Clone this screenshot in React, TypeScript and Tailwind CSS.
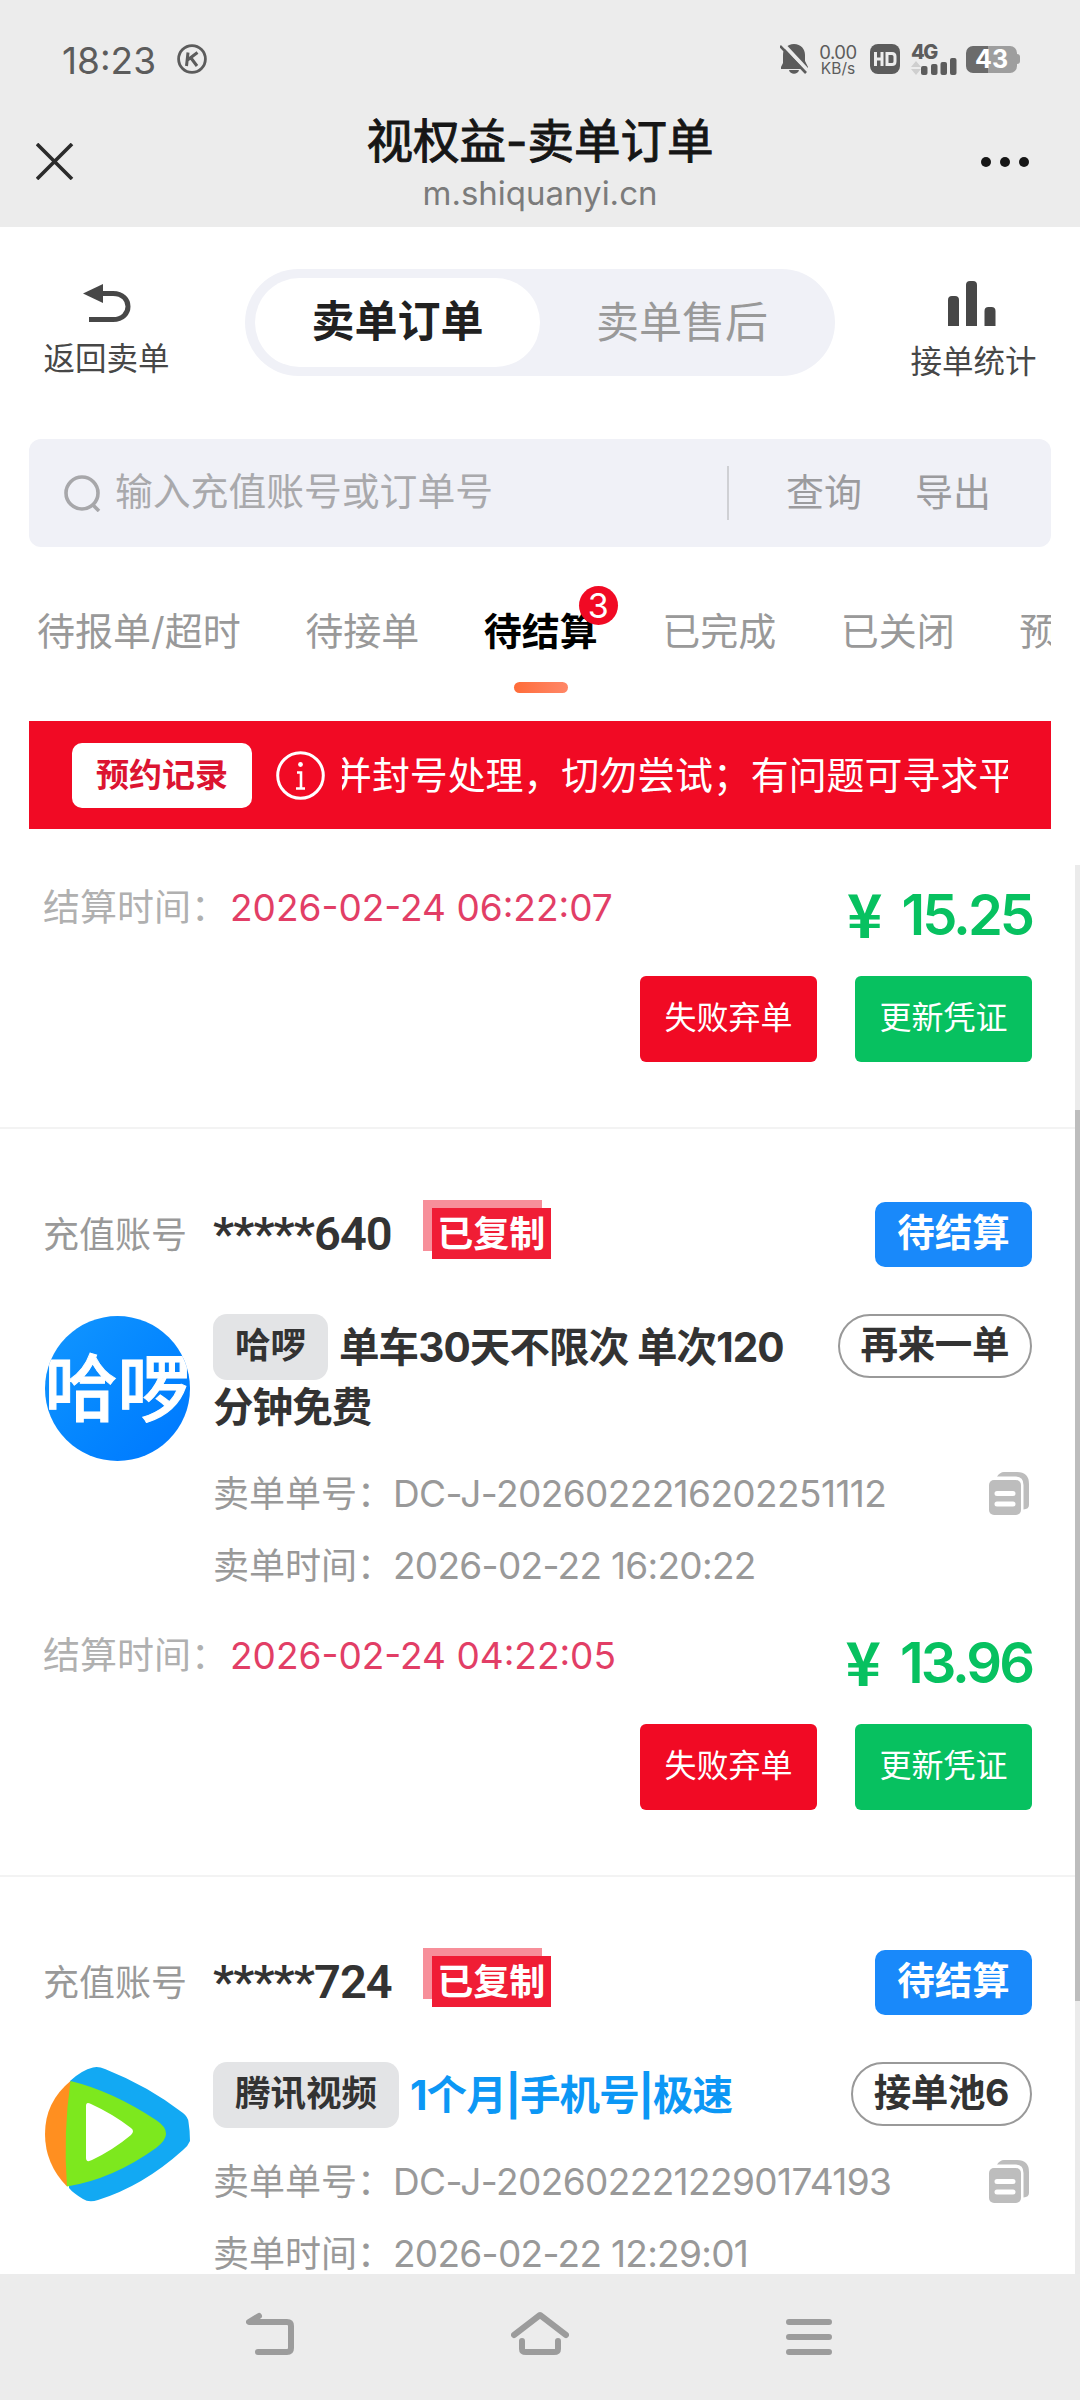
import type { ReactNode } from "react";

type Order = {
  account: string;
  brand: string;
  logo: ReactNode;
  title: string;
  titleClass: string;
  action: string;
  orderNo: string;
  orderTime: string;
  settleTime?: string;
  price?: string;
};

const tabs = ["待报单/超时", "待接单", "待结算", "已完成", "已关闭", "预约"];

function HelloLogo() {
  return (
    <div className="mt-[2px] flex h-[145px] w-[145px] shrink-0 items-center justify-center overflow-hidden rounded-full bg-linear-to-br from-[#1296ff] to-[#0077ff]">
      <span className="text-[73px] leading-none font-medium whitespace-nowrap text-white [-webkit-text-stroke:1px_white]">
        哈啰
      </span>
    </div>
  );
}

function TencentVideoLogo() {
  return (
    <svg className="mt-[5px] h-[135px] w-[145px] shrink-0" viewBox="0 0 145 135">
      <path
        d="M25 14 Q37 3 48 .5 Q53 -1 60 2 Q103 19 138 46 Q143 50 143.5 55 Q145 64 145 74 Q143 79 138 83 Q98 119 53 133 Q44 136 38 132 Q28 126 24 121 L24 110 Z"
        fill="#12a9f3"
      />
      <path d="M25.5 14 Q0 35 0 67 Q0 97 22 119.5 L32 66 Z" fill="#ff8f20" />
      <path
        d="M25.5 14 Q67 24 111 53 Q131 66 111 81 Q68 112 22 119.5 Q18 66 25.5 14 Z"
        fill="#7de81e"
      />
      <path
        d="M41 39 Q41 34 46 37 Q68 47 86 61 Q90 64 86 68 Q68 83 47 93 Q41 96 41 91 Z"
        fill="#fff"
      />
    </svg>
  );
}

const orders: Order[] = [
  {
    account: "*****640",
    brand: "哈啰",
    logo: <HelloLogo />,
    title: "单车30天不限次 单次120分钟免费",
    titleClass: "text-[#333]",
    action: "再来一单",
    orderNo: "DC-J-2026022216202251112",
    orderTime: "2026-02-22 16:20:22",
    settleTime: "2026-02-24 04:22:05",
    price: "13.96",
  },
  {
    account: "*****724",
    brand: "腾讯视频",
    logo: <TencentVideoLogo />,
    title: "1个月|手机号|极速",
    titleClass: "text-[#0c97f5]",
    action: "接单池6",
    orderNo: "DC-J-2026022212290174193",
    orderTime: "2026-02-22 12:29:01",
  },
];

function StatusBar() {
  return (
    <div className="flex h-[118px] items-center pr-[60px] pl-[62px] text-[#5c5c5c]">
      <span className="pt-[2px] text-[37px] leading-none">18:23</span>
      <svg className="ml-[21px] h-[30px] w-[30px]" viewBox="0 0 30 30" fill="none" stroke="currentColor">
        <circle cx="15" cy="15" r="13.4" strokeWidth="2.8" />
        <path d="M11 8.5 9.5 22M20.5 8.5 10.5 16M14 14l6 8" strokeWidth="3" />
      </svg>

      <div className="ml-auto flex items-center">
        <svg className="h-[32px] w-[28px]" viewBox="0 0 28 32">
          <path
            d="M14 1c7 0 11 5 11 11v6l3 6v2H1v-2l2-4v-8C3 6 7 1 14 1ZM9 27h10c-1 5-9 5-10 0Z"
            fill="currentColor"
          />
          <path d="M2 0 29 29" stroke="#ececec" strokeWidth="4" />
          <path d="M0 3 26 30" stroke="currentColor" strokeWidth="2.6" />
        </svg>
        <div className="ml-[11px] w-[38px] text-center">
          <div className="text-[18.5px] leading-[18px] tracking-tight">0.00</div>
          <div className="text-[15.5px] leading-[15px]">KB/s</div>
        </div>
        <svg className="ml-[13px] h-[30px] w-[30px]" viewBox="0 0 30 30">
          <rect width="30" height="30" rx="8" fill="currentColor" />
          <path
            d="M5.5 8v14M12 8v14M5.5 15H12M17 9.5h5q3 0 3 3v5q0 3-3 3h-5Z"
            fill="none"
            stroke="#ececec"
            strokeWidth="3"
          />
        </svg>
        <div className="ml-[11px] h-[31px] w-[46px]">
          <div className="text-[20px] leading-[16px] font-extrabold tracking-[-1.5px]">4G</div>
          <svg className="h-[15px] w-[46px]" viewBox="0 0 46 15" overflow="visible">
            <path d="M0 7 5 1l5 6ZM0 9h10l-5 6Z" fill="#cfcfcf" />
            <rect x="10" y="6" width="6.500" height="9" rx="2" fill="currentColor" />
            <rect x="20" y="4" width="6.500" height="11" rx="2" fill="currentColor" />
            <rect x="29.500" y="2" width="6.500" height="13" rx="2" fill="currentColor" />
            <rect x="39" y="-2" width="6.500" height="17" rx="2" fill="currentColor" />
          </svg>
        </div>
        <div className="ml-[9px] flex items-center">
          <div className="flex h-[27px] w-[51px] items-center justify-center rounded-[7px] bg-linear-to-r from-[#6b6b6b] from-43% to-[#9e9e9e] to-43% text-[25px] leading-none font-bold text-white">
            43
          </div>
          <div className="h-[10px] w-[3px] rounded-r-sm bg-[#9e9e9e]" />
        </div>
      </div>
    </div>
  );
}

function TitleBar() {
  return (
    <div className="flex h-[109px] items-start justify-between pr-[51px] pl-[36px]">
      <svg className="mt-[25px] h-[37px] w-[63px]" viewBox="0 0 63 37">
        <path d="M1 1 36 36M36 1 1 36" stroke="#2b2b2b" strokeWidth="3.6" />
      </svg>
      <div className="flex flex-col items-center">
        <div className="text-[46.5px] leading-[46px] text-[#161616] [-webkit-text-stroke:1px_#161616]">
          视权益-卖单订单
        </div>
        <div className="mt-[9px] text-[33px] leading-[40px] text-[#7b7b7b]">m.shiquanyi.cn</div>
      </div>
      <div className="mt-[39px] flex gap-[9px]">
        <i className="h-[10px] w-[10px] rounded-full bg-[#161616]" />
        <i className="h-[10px] w-[10px] rounded-full bg-[#161616]" />
        <i className="h-[10px] w-[10px] rounded-full bg-[#161616]" />
      </div>
    </div>
  );
}

function Toolbar() {
  return (
    <div className="flex h-[149px] items-start justify-between pt-[42px] pr-[43px] pl-[43px] text-[#474747]">
      <div className="flex w-[127px] flex-col items-center">
        <svg className="mt-[15px] h-[38px] w-[48px]" viewBox="0 0 48 38">
          <path d="M0 9.500 20 0v19Z" fill="currentColor" />
          <path d="M18 9.500h12c20 0 20 26 0 26H6" fill="none" stroke="currentColor" strokeWidth="5" />
        </svg>
        <span className="mt-[21px] text-[31.5px] leading-[32px] whitespace-nowrap">返回卖单</span>
      </div>

      <div className="flex h-[107px] w-[590px] items-center rounded-full bg-[#f0f1f7] pl-[10px] text-[43px] leading-none">
        <div className="flex h-[89px] w-[285px] items-center justify-center rounded-full bg-white pb-[2px] font-bold text-[#212121]">
          卖单订单
        </div>
        <div className="flex-1 pl-[56px] text-[#999]">卖单售后</div>
      </div>

      <div className="flex w-[127px] flex-col items-center">
        <svg className="mt-[12px] mr-[3px] h-[45px] w-[48px]" viewBox="0 0 48 45" fill="currentColor">
          <path d="M0 45V19q0-4 4-4h3q4 0 4 4v26ZM18 45V4q0-4 4-4h3q4 0 4 4v41ZM36.500 45V30q0-4 4-4h3q4 0 4 4v15Z" />
        </svg>
        <span className="mt-[20px] text-[31.5px] leading-[32px] whitespace-nowrap">接单统计</span>
      </div>
    </div>
  );
}

function SearchBar() {
  return (
    <div className="mx-[29px] mt-[63px] flex h-[108px] items-center rounded-xl bg-[#f0f1f7] pl-[35px] text-[38px] leading-none text-[#9b9b9e]">
      <svg className="h-[37px] w-[37px]" viewBox="0 0 37 37" fill="none" stroke="#a7a7aa" strokeWidth="3.6">
        <circle cx="18" cy="18" r="16" />
        <path d="m28 29 7 7" />
      </svg>
      <span className="ml-[14px] pb-[2px] text-[37.8px] text-[#a9a9ac]">输入充值账号或订单号</span>
      <i className="ml-auto h-[54px] w-[2px] bg-[#cfd0d4]" />
      <span className="ml-[57px] pb-[2px]">查询</span>
      <span className="mr-[60px] ml-[53px] pb-[2px]">导出</span>
    </div>
  );
}

function Tabs() {
  return (
    <div className="mx-[29px] flex h-[174px] items-start gap-[64.5px] overflow-hidden pt-[65px] pl-[8px] text-[38px] leading-[38px] whitespace-nowrap text-[#999]">
      {tabs.map((tab) =>
        tab === "待结算" ? (
          <div key={tab} className="relative flex flex-col items-center font-bold text-black">
            {tab}
            <i className="mt-[32px] h-[11px] w-[54px] rounded-full bg-linear-to-r from-[#ff6c38] to-[#ff8767]" />
            <b className="absolute -top-[26px] -right-[20px] flex h-[39px] w-[39px] items-center justify-center rounded-full bg-[#f10a24] text-[34px] font-normal text-white">
              3
            </b>
          </div>
        ) : (
          <div key={tab}>{tab}</div>
        ),
      )}
    </div>
  );
}

function Notice() {
  return (
    <div className="mx-[29px] flex h-[108px] items-center bg-[#f10a24] pr-[43px] pl-[43px]">
      <div className="flex h-[65px] w-[180px] shrink-0 items-center justify-center rounded-[10px] bg-white text-[33px] leading-none font-bold text-[#dc1431]">
        预约记录
      </div>
      <svg className="ml-[24px] h-[49px] w-[49px] shrink-0" viewBox="0 0 49 49" fill="none" stroke="#fff">
        <circle cx="24.500" cy="24.500" r="22.800" strokeWidth="3" />
        <path d="M21 21.500h4V37M20 37.500h9" strokeWidth="2.600" />
        <circle cx="24.500" cy="13.500" r="2.400" fill="#fff" stroke="none" />
      </svg>
      <div className="ml-[17px] flex-1 overflow-hidden text-[37.9px] leading-[50px] whitespace-nowrap text-white">
        <span className="-ml-[8px]">并封号处理，切勿尝试；有问题可寻求平台</span>
      </div>
    </div>
  );
}

function CopyIcon() {
  return (
    <svg className="h-[43px] w-[40px]" viewBox="0 0 40 43" fill="#bdbdbd">
      <path d="M8 4.500Q11 0 15 0h13q12 0 12 12v21q0 4-5.500 4.500V13q0-8.500-8-8.500Z" />
      <rect y="8" width="32" height="35" rx="5" />
      <path d="M8 21.500h16M8 32h16" stroke="#fff" strokeWidth="5" strokeLinecap="round" />
    </svg>
  );
}

function CopiedStamp() {
  return (
    <div className="relative mb-[10px] h-[59px] w-[128px]">
      <div className="h-[51px] w-[119px] bg-[#f78f9a]" />
      <div className="absolute right-0 bottom-0 flex h-[51px] w-[119px] items-center justify-center bg-[#f01d35] text-[36px] leading-none font-bold text-white">
        已复制
      </div>
    </div>
  );
}

function Settlement({ time, price }: { time: string; price: string }) {
  return (
    <div className="pr-[48px] pb-[65px] pl-[43px]">
      <div className="flex h-[104px] items-center justify-between">
        <div className="flex items-center text-[37px] leading-none text-[#b0b0b0]">
          <span className="w-[187px]">结算时间：</span>
          <span className="text-[#e23e66]">{time}</span>
        </div>
        <div className="mt-[16px] flex items-center text-[56px] leading-none font-semibold tracking-[-3px] text-[#07c160]">
          <span className="mr-[22px] pb-[6px] font-['Noto_Sans_CJK_SC'] text-[60px] font-bold">¥</span>
          {price}
        </div>
      </div>
      <div className="mt-[17px] flex justify-end gap-[38px] text-[32px] leading-none text-white">
        <button className="h-[86px] w-[177px] rounded-md bg-[#f10a24] pb-[2px]">失败弃单</button>
        <button className="h-[86px] w-[177px] rounded-md bg-[#07c160] pb-[2px]">更新凭证</button>
      </div>
    </div>
  );
}

function OrderCard({ order }: { order: Order }) {
  return (
    <div className="border-t-2 border-[#f3f3f3]">
      <div className="mt-[73px] flex h-[65px] items-center pr-[48px] pl-[43px]">
        <span className="w-[170px] text-[36px] leading-none text-[#999]">充值账号</span>
        <span className="mr-[31px] pb-[3px] font-[Roboto] text-[47px] leading-none font-semibold tracking-[-0.9px] text-[#333]">
          {order.account}
        </span>
        <CopiedStamp />
        <span className="ml-auto flex h-[65px] w-[157px] items-center justify-center rounded-[10px] bg-[#1989fa] pb-[4px] text-[37.5px] leading-none font-bold text-white">
          待结算
        </span>
      </div>

      <div className="mt-[47px] flex pr-[48px] pl-[45px]">
        {order.logo}
        <div className="ml-[23px] flex-1">
          <div className="flex items-start justify-between">
            <p
              className={`mt-[4px] w-[590px] text-[40.5px] leading-[60px] font-bold tracking-[-0.9px] ${order.titleClass}`}
            >
              <span className="-mt-[4px] mr-[11px] -mb-[2px] inline-block h-[66px] rounded-[14px] bg-[#e3e4e6] px-[22px] align-top text-[35.5px] leading-[64px] tracking-normal text-[#333]">
                {order.brand}
              </span>
              {order.title}
            </p>
            <span className="-ml-[60px] rounded-full border-2 border-[#999] px-[21px] pb-[3px] text-[37.5px] leading-[57px] font-bold tracking-[-0.4px] whitespace-nowrap text-[#333]">
              {order.action}
            </span>
          </div>
          <div className="mt-[19px] text-[36px] leading-none text-[#999]">
            <div className="flex h-[73px] items-center">
              <span className="w-[180px]">卖单单号：</span>
              <span className="mr-auto text-[37px] tracking-[-0.6px]">{order.orderNo}</span>
              <div className="mr-[3px]">
                <CopyIcon />
              </div>
            </div>
            <div className="flex h-[73px] items-center pb-[2px]">
              <span className="w-[180px]">卖单时间：</span>
              <span className="text-[37px] tracking-[-0.7px]">{order.orderTime}</span>
            </div>
          </div>
        </div>
      </div>

      {order.settleTime && order.price && <Settlement time={order.settleTime} price={order.price} />}
    </div>
  );
}

function SystemNav() {
  return (
    <div className="flex h-[126px] items-start justify-between bg-[#ececec] pt-[37px] pr-[248px] pl-[246px]">
      <svg className="h-[46px] w-[48px]" viewBox="0 0 48 46" fill="none" stroke="#9c9c9c" strokeWidth="6" strokeLinecap="round" strokeLinejoin="round">
        <path d="M13 5 3 11h38q4 0 4 4v22q0 4-4 4H12" />
      </svg>
      <svg className="h-[46px] w-[58px]" viewBox="0 0 58 46" fill="none" stroke="#9c9c9c" strokeWidth="6" strokeLinecap="round" strokeLinejoin="round">
        <path d="M3 24 29 4l26 20M11 30v8q0 3 4 3h28q4 0 4-3v-8" />
      </svg>
      <svg className="h-[46px] w-[46px]" viewBox="0 0 46 46" stroke="#9c9c9c" strokeWidth="6" strokeLinecap="round">
        <path d="M3 11h40M3 26h40M3 41h40" />
      </svg>
    </div>
  );
}

export default function App() {
  return (
    <div className="flex h-[2400px] w-[1080px] flex-col overflow-hidden bg-white font-[Inter,'Noto_Sans_CJK_SC',sans-serif]">
      <header className="bg-[#ececec]">
        <StatusBar />
        <TitleBar />
      </header>
      <Toolbar />
      <SearchBar />
      <Tabs />
      <Notice />

      {/* Order list, scrolled part of the way down */}
      <main className="relative h-[1445px] overflow-hidden pt-[26px]">
        <Settlement time="2026-02-24 06:22:07" price="15.25" />
        {orders.map((order) => (
          <OrderCard key={order.orderNo} order={order} />
        ))}
        <div className="absolute top-[36px] right-0 bottom-0 w-[5px] bg-[#ebebeb]">
          <div className="mt-[245px] h-[891px] bg-[#bdbdbd]" />
        </div>
      </main>
      <SystemNav />
    </div>
  );
}
